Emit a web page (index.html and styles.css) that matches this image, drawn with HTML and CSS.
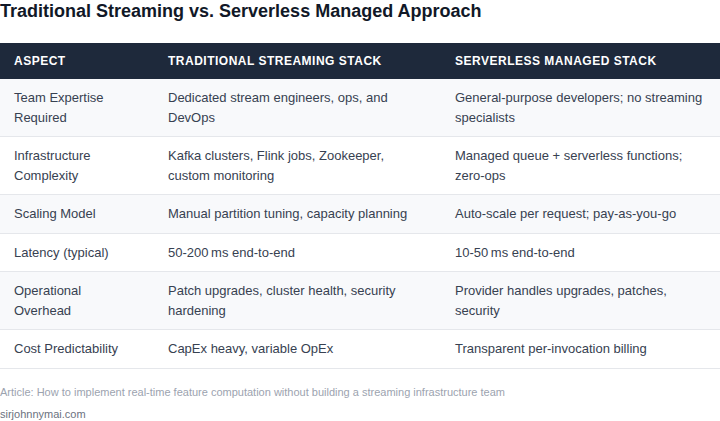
FILE: index.html
```html
<!DOCTYPE html>
<html>
<head>
<meta charset="utf-8">
<link rel="stylesheet" href="styles.css">
</head>
<body>
<h1 class="title">Traditional Streaming vs. Serverless Managed Approach</h1>
<table class="cmp">
  <thead>
    <tr><th class="c1">Aspect</th><th class="c2">Traditional Streaming Stack</th><th class="c3">Serverless Managed Stack</th></tr>
  </thead>
  <tbody>
    <tr><td>Team Expertise Required</td><td>Dedicated stream engineers, ops, and DevOps</td><td>General-purpose developers; no streaming specialists</td></tr>
    <tr><td>Infrastructure Complexity</td><td>Kafka clusters, Flink jobs, Zookeeper, custom monitoring</td><td>Managed queue + serverless functions; zero-ops</td></tr>
    <tr><td>Scaling Model</td><td>Manual partition tuning, capacity planning</td><td>Auto-scale per request; pay-as-you-go</td></tr>
    <tr><td>Latency (typical)</td><td>50-200&#8239;ms end-to-end</td><td>10-50&#8239;ms end-to-end</td></tr>
    <tr><td>Operational Overhead</td><td>Patch upgrades, cluster health, security hardening</td><td>Provider handles upgrades, patches, security</td></tr>
    <tr><td>Cost Predictability</td><td>CapEx heavy, variable OpEx</td><td>Transparent per-invocation billing</td></tr>
  </tbody>
</table>
<p class="source">Article: How to implement real-time feature computation without building a streaming infrastructure team</p>
<p class="site">sirjohnnymai.com</p>
</body>
</html>
```

FILE: styles.css
```css
html, body {
  margin: 0;
  padding: 0;
  background: #ffffff;
  font-family: "Liberation Sans", Arial, sans-serif;
}
.title {
  margin: 0;
  font-size: 18px;
  line-height: 22px;
  font-weight: bold;
  color: #111827;
  padding: 0 0 21px 0;
}
.cmp {
  width: 720px;
  border-collapse: collapse;
  table-layout: fixed;
  font-size: 13px;
}
.cmp th {
  background: #1e293b;
  color: #ffffff;
  text-align: left;
  font-size: 12px;
  font-weight: bold;
  text-transform: uppercase;
  letter-spacing: 0.5px;
  height: 36px;
  padding: 0 14px;
  box-sizing: border-box;
}
.cmp .c1 { width: 154px; }
.cmp .c2 { width: 287px; }
.cmp td {
  padding: 9px 14px;
  line-height: 19.5px;
  color: #374151;
  vertical-align: top;
  border-bottom: 1px solid #e5e7eb;
}
.cmp tbody tr:nth-child(odd) { background: #f8f9fb; }
.cmp tbody tr:nth-child(even) { background: #ffffff; }
.source {
  margin: 16px 0 0 0;
  font-size: 11px;
  line-height: 14px;
  color: #9ca3af;
}
.site {
  margin: 8px 0 0 0;
  font-size: 11px;
  line-height: 14px;
  color: #6b7280;
}
```
